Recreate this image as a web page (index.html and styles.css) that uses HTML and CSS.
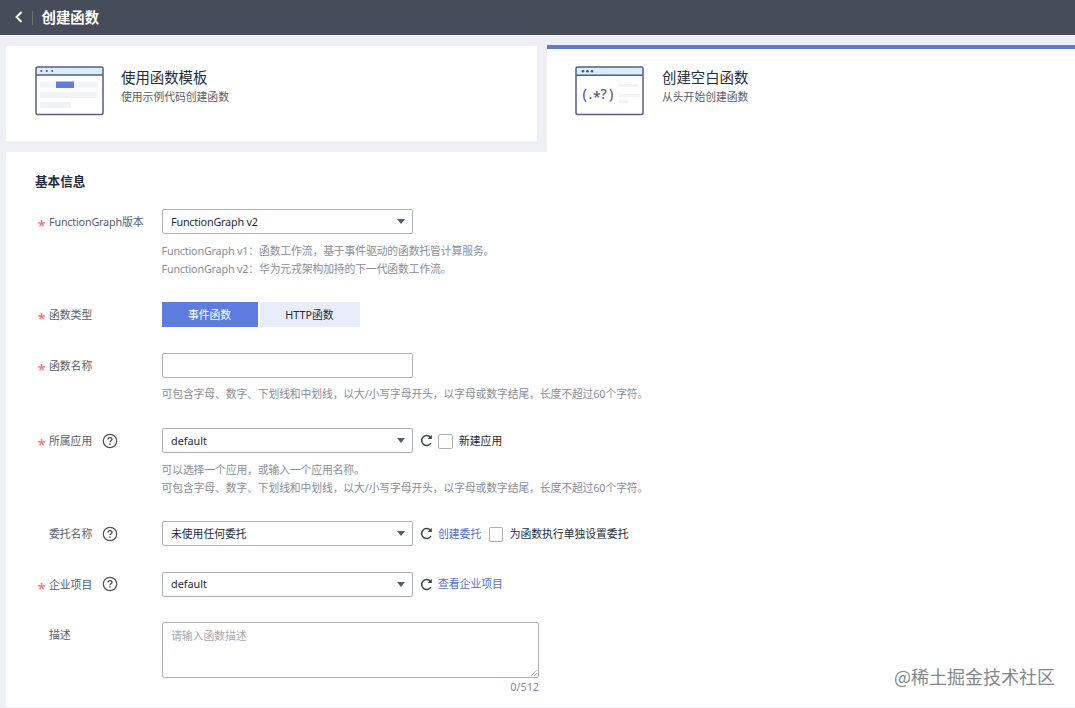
FILE: index.html
```html
<!DOCTYPE html>
<html lang="zh-CN">
<head>
<meta charset="utf-8">
<title>创建函数</title>
<link rel="stylesheet" href="styles.css">
</head>
<body>
<svg class="defs" width="0" height="0" aria-hidden="true">
  <symbol id="refresh" viewBox="0 0 13 13"><path d="M11 9A5 5 0 1 1 10.4 3.200" fill="none" stroke="#3c414b" stroke-width="1.500"/><path d="M11.800 1v4.100H7.700z" fill="#3c414b"/></symbol>
  <symbol id="help" viewBox="0 0 16 16"><circle cx="8" cy="8" r="6.700" fill="none" stroke="#4d535e" stroke-width="1.200"/><path d="M6 6.400C6 4 10 4.100 10 6.300 10 7.700 8 7.700 8 9.200" fill="none" stroke="#4d535e" stroke-width="1.400"/><circle cx="8" cy="11" r=".85" fill="#4d535e"/></symbol>
</svg>
<header class="topbar">
  <svg class="back" width="9" height="13" viewBox="0 0 9 13"><path d="M7.500 1l-5 5 5 5" fill="none" stroke="#fff" stroke-width="1.900"/></svg>
  <span class="divider"></span>
  <h1>创建函数</h1>
</header>
<nav class="tabs">
  <div class="tab">
    <svg class="picture" width="69" height="50" viewBox="0 0 69 50">
      <rect x="1" y="1" width="67" height="47.500" rx="1.500" fill="#fff"/><path d="M1 1h67v8H1z" fill="#d9edfd"/>
      <path d="M5 15.500h57v6H5zM5 26h57v6H5zM5 36h31v6H5z" fill="#f2f3f7"/><path d="M21 15.500h18V22H21z" fill="#5e7ce0"/>
      <rect x="1" y="1" width="67" height="47.500" rx="1.500" fill="none" stroke="#575d85" stroke-width="1.500"/><path d="M1 9h67" stroke="#575d85" stroke-width="1.300"/>
      <g fill="#4b5179"><circle cx="6.300" cy="5" r="1"/><circle cx="11.800" cy="5" r="1"/><circle cx="17.200" cy="5" r="1"/></g>
    </svg>
    <div class="caption"><h2>使用函数模板</h2><p>使用示例代码创建函数</p></div>
  </div>
  <div class="tab active">
    <svg class="picture" width="69" height="50" viewBox="0 0 69 50">
      <rect x="1" y="1" width="67" height="47.500" rx="1.500" fill="#fff"/><path d="M1 1h67v8H1z" fill="#d9edfd"/>
      <path d="M44 18h19v3H44zM44 28h21v3H44zM44 34h9v3h-9z" fill="#f2f3f7"/>
      <rect x="1" y="1" width="67" height="47.500" rx="1.500" fill="none" stroke="#575d85" stroke-width="1.500"/><path d="M1 9.300h67" stroke="#575d85" stroke-width="1.500"/>
      <g fill="#4b5179"><circle cx="8" cy="5.200" r="1.300"/><circle cx="12.500" cy="5.200" r="1.300"/><circle cx="17" cy="5.200" r="1.300"/></g>
      <text class="regex" y="32.500"><tspan x="7.500">(</tspan><tspan x="13.500">.</tspan><tspan x="18" dy="3">*</tspan><tspan x="25.500" dy="-3">?</tspan><tspan x="34">)</tspan></text>
    </svg>
    <div class="caption"><h2>创建空白函数</h2><p>从头开始创建函数</p></div>
  </div>
</nav>
<main class="panel">
  <h3>基本信息</h3>
  <div class="row version">
    <label class="required"><span class="latin">FunctionGraph</span>版本</label>
    <div class="field">
      <div class="select latin">FunctionGraph v2</div>
      <p class="hint"><span class="latin">FunctionGraph v1</span>：函数工作流，基于事件驱动的函数托管计算服务。<br><span class="latin">FunctionGraph v2</span>：华为元戎架构加持的下一代函数工作流。</p>
    </div>
  </div>
  <div class="row type">
    <label class="required">函数类型</label>
    <div class="segments"><span class="on">事件函数</span><span>HTTP函数</span></div>
  </div>
  <div class="row name">
    <label class="required">函数名称</label>
    <div class="field">
      <div class="input"></div>
      <p class="hint">可包含字母、数字、下划线和中划线，以大/小写字母开头，以字母或数字结尾，长度不超过60个字符。</p>
    </div>
  </div>
  <div class="row app">
    <label class="required">所属应用<svg class="help"><use href="#help"/></svg></label>
    <div class="field">
      <div class="line"><div class="select">default</div><svg class="refresh"><use href="#refresh"/></svg><span class="check"></span><span class="option">新建应用</span></div>
      <p class="hint">可以选择一个应用，或输入一个应用名称。<br>可包含字母、数字、下划线和中划线，以大/小写字母开头，以字母或数字结尾，长度不超过60个字符。</p>
    </div>
  </div>
  <div class="row agency">
    <label>委托名称<svg class="help"><use href="#help"/></svg></label>
    <div class="line"><div class="select">未使用任何委托</div><svg class="refresh"><use href="#refresh"/></svg><a>创建委托</a><span class="check"></span><span class="option">为函数执行单独设置委托</span></div>
  </div>
  <div class="row project">
    <label class="required">企业项目<svg class="help"><use href="#help"/></svg></label>
    <div class="line"><div class="select">default</div><svg class="refresh"><use href="#refresh"/></svg><a>查看企业项目</a></div>
  </div>
  <div class="row">
    <label>描述</label>
    <div class="field description">
      <div class="textarea">请输入函数描述<svg class="grip" width="6" height="6" viewBox="0 0 6 6"><path d="M0 6l6-6M3 6l3-3" stroke="#a5a8ae" stroke-width=".8"/></svg></div>
      <div class="counter">0/512</div>
    </div>
  </div>
</main>
<div class="watermark">@稀土掘金技术社区</div>
</body>
</html>
```
FILE: styles.css
```css
* { box-sizing: border-box; }
body {
  margin: 0;
  height: 708px;
  overflow: hidden;
  display: flex;
  flex-direction: column;
  background: #eef0f5;
  color: #252b3a;
  font: 10.8px/18px "Noto Sans", "Noto Sans CJK SC", sans-serif;
}
h1, h2, h3, p { margin: 0; }
.defs { position: absolute; }
.latin { letter-spacing: -.2px; }
.topbar {
  flex: none;
  height: 35px;
  display: flex;
  align-items: center;
  padding-left: 13.500px;
  background: #464c59;
  color: #fff;
}
.divider { width: 1px; height: 14px; margin: 0 9px; background: #6a707c; }
.topbar h1 { font-size: 14.400px; line-height: 20px; }
.tabs { flex: none; display: flex; height: 117px; padding: 10px 0 0 6px; }
.tab {
  width: 531px;
  height: 95px;
  margin: 1px 10px 0 0;
  padding: 20px 0 0 29px;
  display: flex;
  background: #fff;
}
.tab.active { flex: 1; height: 107px; margin: 0; padding-top: 17px; padding-left: 28px; border-top: 4px solid #5e7cd4; }
.caption { margin: 2px 0 0 17px; }
.active .caption { margin-left: 18px; }
.caption h2 { font-size: 14.400px; font-weight: 400; line-height: 20px; }
.caption p { color: #575d6c; line-height: 17px; }
.regex { font: 500 14px "Noto Sans", sans-serif; fill: #575d70; }
.panel { flex: none; height: 555px; margin-left: 6px; padding: 21px 0 0 29px; background: #fff; }
.panel h3 { font-size: 12.600px; margin-bottom: 18px; }
.row { display: flex; }
.version { height: 93px; }
.type { height: 50.500px; }
.name { height: 75.500px; }
.app { height: 93px; }
.agency { height: 50.500px; }
.project { height: 50.500px; }
.row label {
  width: 126.500px;
  height: 26px;
  padding-left: 14px;
  display: flex;
  align-items: center;
  position: relative;
  color: #575d6c;
}
.required::before { content: "*"; position: absolute; left: 2.500px; top: 6px; color: #f0686a; font: 15px/20px "Noto Sans", sans-serif; }
.help { width: 16px; height: 16px; margin-left: 10px; margin-top: -1px; }
.select, .input {
  width: 251.500px;
  height: 25.400px;
  border: 1px solid #adb0b8;
  border-radius: 2px;
  padding: 0 7.500px 0 8.500px;
  display: flex;
  align-items: center;
  justify-content: space-between;
}
.select::after { content: ""; border: 4px solid transparent; border-top: 5px solid #575d6c; border-bottom: 0; }
.hint { margin-top: 7.500px; color: #8a8e99; white-space: nowrap; letter-spacing: -.1px; }
.line { display: flex; align-items: center; height: 25.500px; }
.refresh { width: 13px; height: 13px; margin: 0 5.500px 0 6.500px; }
.check { width: 14.500px; height: 14.500px; border: 1px solid #adb0b8; border-radius: 2px; margin: 1px 6.500px 0 0; }
.option { margin-top: 1px; }
.line a { color: #526ecc; }
.line a + .check { margin-left: 7.500px; }
.segments { display: flex; gap: 2px; height: 25px; }
.segments span { width: 100px; display: flex; align-items: center; justify-content: center; background: #e9edfa; }
.segments .on { width: 96px; background: #5e7ce0; color: #fff; }
.description { width: 377.500px; }
.textarea { position: relative; height: 55.500px; border: 1px solid #adb0b8; border-radius: 2px; padding: 4px 8.500px; color: #a6a9b2; }
.grip { position: absolute; right: 1px; bottom: 1px; }
.counter { text-align: right; color: #8a8e99; }
.watermark { position: absolute; right: 20px; bottom: 18px; font: 18px/28px "Noto Sans CJK SC", sans-serif; color: #85878c; }
```
